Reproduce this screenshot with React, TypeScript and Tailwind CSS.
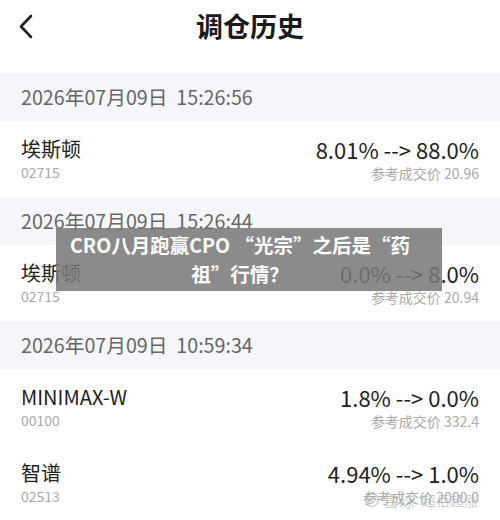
import React from 'react';

const groups = [
  {
    time: '2026年07月09日  15:26:56',
    items: [{ name: '埃斯顿', code: '02715', change: '8.01% --> 88.0%', price: '20.96' }],
  },
  {
    time: '2026年07月09日  15:26:44',
    items: [{ name: '埃斯顿', code: '02715', change: '0.0% --> 8.0%', price: '20.94' }],
  },
  {
    time: '2026年07月09日  10:59:34',
    items: [
      { name: 'MINIMAX-W', code: '00100', change: '1.8% --> 0.0%', price: '332.4' },
      { name: '智谱', code: '02513', change: '4.94% --> 1.0%', price: '2000.0' },
    ],
  },
];

export default function App() {
  return (
    <div
      className="relative w-[500px] h-[520px] overflow-hidden bg-white"
      style={{ fontFamily: '"Noto Sans CJK SC", "Noto Sans", sans-serif' }}
    >
      {/* Header */}
      <div className="relative h-[73px]">
        <div className="flex items-center justify-center h-[52px]">
          <span className="text-[27px] font-bold text-[#1a1a1a]">调仓历史</span>
        </div>
        <svg
          className="absolute left-[16px] top-[13px]"
          width="20"
          height="28"
          viewBox="0 0 20 28"
          fill="none"
          stroke="#222"
          strokeWidth="2.6"
          strokeLinecap="round"
          strokeLinejoin="round"
        >
          <path d="M15 3 L5 13.5 L15 24" />
        </svg>
      </div>

      {groups.map((g, gi) => (
        <div key={gi}>
          <div className="h-[48px] bg-[#f5f6fa] flex items-center pl-[21px] text-[19.7px] text-[#666] whitespace-pre">
            {g.time}
          </div>
          {g.items.map((it, ii) => (
            <div key={ii} className="h-[76px] flex justify-between pl-[21px] pr-[21px] pt-[14px]">
              <div className="flex flex-col">
                <span className="text-[20px] leading-[28px] text-[#222]">{it.name}</span>
                <span className="text-[14px] leading-[18px] text-[#aaa]">{it.code}</span>
              </div>
              <div className="flex flex-col items-end">
                <span className="text-[22px] leading-[28px] text-[#222]">{it.change}</span>
                <span className="text-[14px] leading-[20px] text-[#aaa]">参考成交价 {it.price}</span>
              </div>
            </div>
          ))}
        </div>
      ))}

      {/* Title overlay */}
      <div className="absolute left-[56px] top-[228px] w-[386px] h-[63px] bg-[rgba(120,120,120,0.86)] pl-[8px] pr-[26px] pt-[2px] text-center text-white font-bold text-[19.5px] leading-[29px]">
        CRO八月跑赢CPO “光宗”之后是“药祖”行情？
      </div>

      {/* Watermark */}
      <div className="absolute right-[22px] top-[488px] flex items-center gap-[3px] text-[rgba(170,170,170,0.6)]">
        <svg width="16" height="16" viewBox="0 0 16 16" fill="none" stroke="currentColor" strokeWidth="1.4">
          <circle cx="8" cy="8" r="6.5" />
          <path d="M4 10 Q8 4 12 7" />
        </svg>
        <span className="text-[16px]">雪球</span>
        <span className="text-[14px] ml-[4px]">超佰超涨</span>
      </div>
    </div>
  );
}
